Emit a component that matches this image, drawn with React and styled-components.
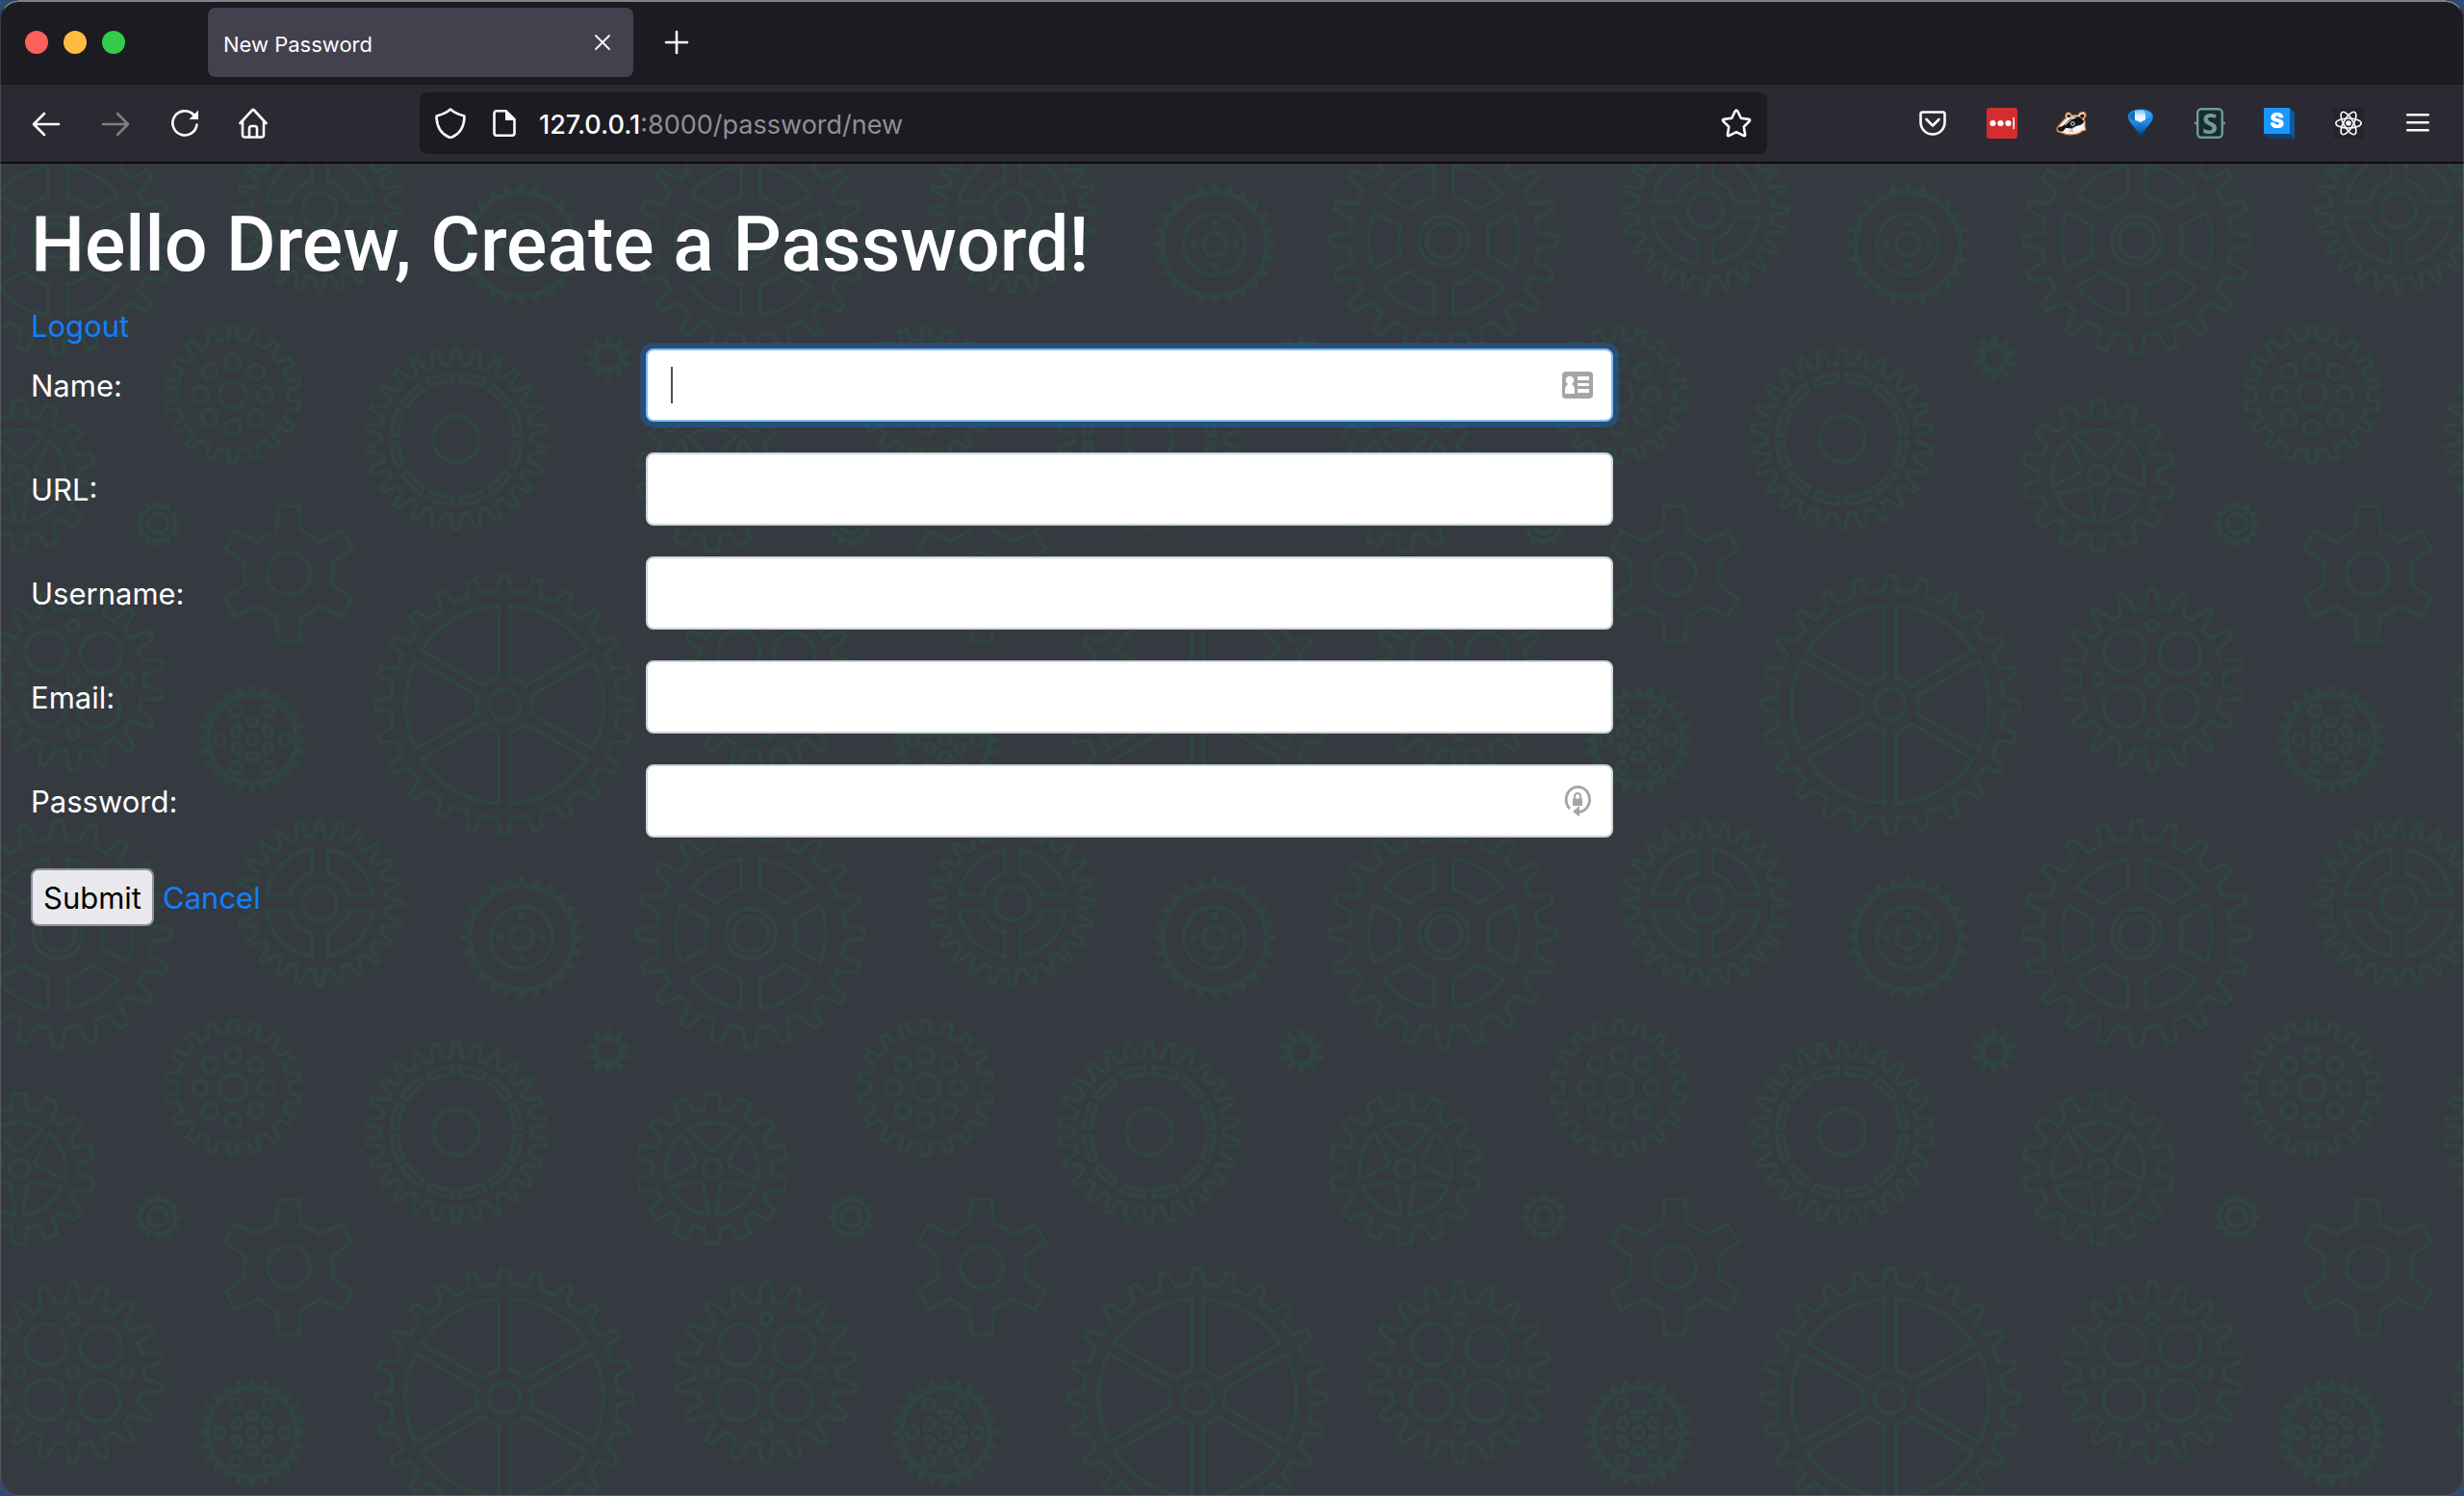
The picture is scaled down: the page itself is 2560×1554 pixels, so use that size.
import React from "react";
import styled, { createGlobalStyle } from "styled-components";

const GlobalStyle = createGlobalStyle`
  *, *::before, *::after { box-sizing: border-box; }
  body {
    margin: 0;
    background: #2c4a74;
    font-family: Inter, "Liberation Sans", sans-serif;
  }
`;

const Window = styled.div`
  position: relative;
  min-height: 100vh;
  display: flex;
  flex-direction: column;
  overflow: hidden;
  border-radius: 20px;
  background: #353940;

  &::after {
    content: "";
    position: absolute;
    inset: 0;
    border: 1px solid rgba(255, 255, 255, 0.15);
    border-top: 2px solid rgba(255, 255, 255, 0.45);
    border-radius: 20px;
    pointer-events: none;
  }
`;

const TabBar = styled.header`
  display: flex;
  align-items: center;
  height: 88px;
  padding: 0 26px;
  background: #1c1b22;
`;

const Lights = styled.div`
  display: flex;
  gap: 16px;
  width: 190px;
`;

const Light = styled.span`
  width: 24px;
  height: 24px;
  border-radius: 50%;
  background: ${(p) => p.$color};
`;

const Tab = styled.div`
  display: flex;
  align-items: center;
  justify-content: space-between;
  width: 442px;
  height: 72px;
  padding: 0 16px;
  border-radius: 8px;
  background: #42414d;
  color: #fbfbfe;
`;

const TabTitle = styled.span`
  padding-top: 4px;
  font-size: 22px;
  line-height: 32px;
`;

const IconButton = styled.button`
  display: flex;
  flex: none;
  align-items: center;
  justify-content: center;
  width: 32px;
  height: 32px;
  padding: 0;
  border: 0;
  background: none;
  color: #fbfbfe;
  opacity: ${(p) => (p.disabled ? 0.4 : 1)};

  svg { display: block; }
`;

const NewTab = styled(IconButton)`
  margin-left: 29px;
`;

const Toolbar = styled.nav`
  display: flex;
  align-items: center;
  justify-content: space-between;
  gap: 156px;
  height: 82px;
  padding: 0 32px;
  border-bottom: 2px solid #0c0c0d;
  background: #2b2a33;
`;

const ToolGroup = styled.div`
  display: flex;
  flex: none;
  gap: 40px;
`;

const UrlBar = styled.div`
  display: flex;
  flex: 1;
  align-items: center;
  gap: 20px;
  height: 64px;
  padding: 0 16px;
  border-radius: 8px;
  background: #1c1b22;
`;

const UrlIcons = styled.div`
  display: flex;
  gap: 24px;
`;

const Url = styled.div`
  flex: 1;
  padding-top: 4px;
  color: #8f8f95;
  font-size: 27px;
  line-height: 36px;

  b {
    color: #fbfbfe;
    font-weight: 500;
  }
`;

const Page = styled.main`
  position: relative;
  flex: 1;
  padding: 32px;
  color: #fff;
  font-size: 31px;
  line-height: 48px;
`;

const Backdrop = styled.svg`
  position: absolute;
  inset: 0;
  width: 100%;
  height: 100%;
`;

const Content = styled.div`
  position: relative;
`;

const Title = styled.h1`
  margin: 0 0 8px;
  font-family: Roboto, Inter, sans-serif;
  font-size: 79px;
  font-weight: 500;
  line-height: 104px;
`;

const Link = styled.a`
  color: #147eff;
  text-decoration: none;
`;

const LinkLine = styled.div`
  height: 48px;
  line-height: 50px;
`;

const FieldRow = styled.div`
  display: grid;
  grid-template-columns: repeat(12, 1fr);
  column-gap: 60px;
  align-items: center;
  margin-bottom: 32px;
`;

const Label = styled.label`
  grid-column: span 3;
  padding-top: 2px;
`;

const Control = styled.div`
  position: relative;
  grid-column: span 5;
`;

const Input = styled.input`
  display: block;
  width: 100%;
  height: 76px;
  padding: 12px 24px;
  border: 2px solid ${(p) => (p.$active ? "#80bdff" : "#ced4da")};
  border-radius: 8px;
  outline: 0;
  background: #fff;
  box-shadow: ${(p) => (p.$active ? "0 0 0 6px rgba(20, 115, 215, 0.34)" : "none")};
  color: #495057;
  font: inherit;
`;

const Caret = styled.span`
  position: absolute;
  top: 19px;
  left: 26px;
  width: 2px;
  height: 38px;
  background: #495057;
`;

const FieldIcon = styled.span`
  position: absolute;
  top: 22px;
  right: 21px;
  width: 32px;
  height: 32px;
  color: #a5a5a5;

  svg { display: block; }
`;

const Actions = styled.div`
  display: flex;
  align-items: center;
  gap: 9px;

  a { padding-top: 2px; }
`;

const Submit = styled.button`
  height: 60px;
  padding: 2px 11px 0;
  border: 2px solid #8f8f9d;
  border-radius: 8px;
  background: #e9e9ed;
  color: #000;
  font: inherit;
`;

/* ---------- gear pattern ---------- */

const point = (r, a) => [r * Math.cos(a), r * Math.sin(a)];
const fmt = (p) => p.map((n) => n.toFixed(2)).join(" ");

// Outline of a gear; tip and base are half widths of a tooth.
function gearPath(n, outer, root, tip, base, start = -Math.PI / 2, bulge = 0) {
  let d = "";
  for (let i = 0; i < n; i++) {
    const a = start + (i * 2 * Math.PI) / n;
    const place = (along, across) => [
      along * Math.cos(a) - across * Math.sin(a),
      along * Math.sin(a) + across * Math.cos(a),
    ];
    const along = Math.sqrt(root * root - base * base);
    d += i === 0 ? `M${fmt(place(along, -base))}` : `A${root} ${root} 0 0 1 ${fmt(place(along, -base))}`;
    if (bulge) {
      d += `Q${fmt(place(outer - 4, -bulge))} ${fmt(place(outer, -tip))}`;
      d += `L${fmt(place(outer, tip))}`;
      d += `Q${fmt(place(outer - 4, bulge))} ${fmt(place(along, base))}`;
    } else {
      d += `L${fmt(place(outer, -tip))}L${fmt(place(outer, tip))}L${fmt(place(along, base))}`;
    }
    if (i === n - 1) {
      const p = [
        along * Math.cos(start) + base * Math.sin(start),
        along * Math.sin(start) - base * Math.cos(start),
      ];
      d += `A${root} ${root} 0 0 1 ${fmt(p)}Z`;
    }
  }
  return d;
}

// Ring sectors split by straight bars that are 2 * gap wide.
function sectors(n, outer, inner, gap, start = -Math.PI / 2) {
  let d = "";
  const step = (2 * Math.PI) / n;
  for (let i = 0; i < n; i++) {
    const a = start + i * step;
    const b = a + step;
    const o = Math.asin(gap / outer);
    const q = Math.asin(gap / inner);
    d += `M${fmt(point(outer, a + o))}A${outer} ${outer} 0 0 1 ${fmt(point(outer, b - o))}`;
    d += `L${fmt(point(inner, b - q))}A${inner} ${inner} 0 0 0 ${fmt(point(inner, a + q))}Z`;
  }
  return d;
}

const around = (n, r, size, offset = 0) =>
  Array.from({ length: n }, (_, i) => {
    const [x, y] = point(r, offset + (i * 2 * Math.PI) / n);
    return <circle key={i} cx={x} cy={y} r={size} />;
  });

const GEAR = "#304440";

function Gear({ x, y, d, children }) {
  return (
    <g transform={`translate(${x} ${y})`}>
      <path d={d} />
      {children}
    </g>
  );
}

const Toothed = ({ n, outer, root, tip, base, hole }) => (
  <path
    d={`${gearPath(n, outer, root, tip, base)}M${hole} 0A${hole} ${hole} 0 1 0 ${-hole} 0A${hole} ${hole} 0 1 0 ${hole} 0Z`}
    fill={GEAR}
    fillRule="evenodd"
    strokeWidth="1"
    strokeLinejoin="round"
  />
);

function GearTile() {
  return (
    <g id="gear-tile" fill="none" stroke={GEAR} strokeWidth="4">
      <Gear x={60} y={80} d={gearPath(20, 118, 98, 4.5, 8.5)}>
        <circle r="26" />
        <circle r="18" />
        <path d={sectors(6, 78, 47, 10)} />
      </Gear>
      <Gear x={332} y={48} d={gearPath(24, 86, 70, 2, 5.5)}>
        <circle r="18" />
        <path d={sectors(4, 56, 32, 8)} />
      </Gear>
      <g transform="translate(542 84)">
        <Toothed n={24} outer={63} root={56} tip={1.5} base={4} hole={52} />
        <circle r="32" />
        <circle r="12" />
        <g fill={GEAR} stroke="none">{around(4, 22, 4)}</g>
      </g>
      <g transform="translate(632 202)">
        <Toothed n={10} outer={23.5} root={15} tip={1.5} base={3.5} hole={10.5} />
      </g>
      <Gear x={242} y={240} d={gearPath(18, 70, 58, 4, 5)}>
        <circle r="14" />
        {around(8, 34, 8)}
      </Gear>
      <Gear x={474} y={286} d={gearPath(26, 94, 78, 2.5, 6)}>
        <circle r="24" />
        <path d={sectors(12, 68, 60.5, 4)} />
      </Gear>
      <Gear x={20} y={324} d={gearPath(14, 78, 62, 6.5, 8.5)}>
        <circle r="10" />
        {[0, 72, 144, 216, 288].map((a) => (
          <path key={a} transform={`rotate(${a})`} d="M-25 -41A48 48 0 0 1 25 -41L3 -19Q0 -17 -3 -19Z" />
        ))}
      </Gear>
      <g transform="translate(164 374)">
        <Toothed n={12} outer={23.5} root={19.5} tip={1.5} base={3} hole={16.5} />
        <circle r="10" />
      </g>
      <Gear x={300} y={426} d={gearPath(6, 70, 46, 10.5, 13)}>
        <circle r="22" />
      </Gear>
      <Gear x={76} y={536} d={gearPath(18, 94, 74, 2.5, 7, -Math.PI / 2, 6)}>
        <circle cx="-28" cy="-29" r="21.5" />
        <circle cx="29" cy="-27" r="21.5" />
        <circle cx="-29" cy="28" r="21.5" />
        <circle cx="27" cy="29" r="21.5" />
        <circle r="6" />
        {around(4, 56, 6)}
      </Gear>
      <g transform="translate(262 598)">
        <Toothed n={24} outer={55.5} root={48} tip={1.5} base={4} hole={44} />
        {around(6, 34, 6)}
        <circle r="6" />
        {[0, 60, 120, 180, 240, 300].map((a) => (
          <path key={a} transform={`rotate(${a})`} d="M-7 -21A22 22 0 0 1 7 -21L4 -14H-4Z" />
        ))}
      </g>
      <Gear x={524} y={562} d={gearPath(24, 134, 118, 4, 7.5)}>
        <circle r="16" />
        <path d={sectors(6, 103, 29, 6)} />
      </Gear>
    </g>
  );
}

const GearBackdrop = () => (
  <Backdrop aria-hidden="true">
    <defs>
      <GearTile />
      <pattern id="gears" width="720" height="720" patternUnits="userSpaceOnUse">
        <use href="#gear-tile" />
        <use href="#gear-tile" x="720" />
        <use href="#gear-tile" y="720" />
        <use href="#gear-tile" x="720" y="720" />
      </pattern>
    </defs>
    <rect width="100%" height="100%" fill="url(#gears)" />
  </Backdrop>
);

/* ---------- icons ---------- */

const Icon = ({ children, size = 32, ...rest }) => (
  <svg
    width={size}
    height={size}
    viewBox={`0 0 ${size} ${size}`}
    fill="none"
    stroke="currentColor"
    strokeWidth="2.6"
    strokeLinecap="round"
    strokeLinejoin="round"
    overflow="visible"
    aria-hidden="true"
    {...rest}
  >
    {children}
  </svg>
);

const CloseIcon = () => (
  <Icon size={16} strokeWidth="1.8"><path d="M1 1l14 14M15 1L1 15" /></Icon>
);
const PlusIcon = () => (
  <Icon size={24} strokeWidth="2.6"><path d="M12 1v22M1 12h22" /></Icon>
);
const BackIcon = () => (
  <Icon><path d="M29 17H3.500M14 6L3 17l11 11" /></Icon>
);
const ForwardIcon = () => (
  <Icon><path d="M3 17h25.500M18 6l11 11-11 11" /></Icon>
);
const ReloadIcon = () => (
  <Icon>
    <path d="M28.500 17.500A12.600 12.600 0 1 1 24.500 6.500L27 9" />
    <path d="M30 2.500V12h-9.500z" fill="currentColor" stroke="none" />
  </Icon>
);
const HomeIcon = () => (
  <Icon>
    <path d="M1.500 16L14 2.500q1-1 2 0L28.500 16M4 14v14q0 2.500 2.500 2.500h17q2.500 0 2.500-2.500V14M11 30.500v-9q0-2.500 2.500-2.500h3q2.500 0 2.500 2.500v9" />
  </Icon>
);
const ShieldIcon = () => (
  <Icon><path d="M16 1.500C12 5 7 7 3 8c-1 0-1.500 1-1.500 2C2 19 6 27 14.500 30.500q1.500.6 3 0C26 27 30 19 30.500 10c0-1-.5-2-1.500-2C25 7 20 5 16 1.500z" /></Icon>
);
const DocIcon = () => (
  <Icon>
    <path d="M17.500 3.300H8q-2.500 0-2.500 2.500v20.400q0 2.500 2.500 2.500h16q2.500 0 2.500-2.500V12z" />
    <path d="M17 3l10.500 10H17z" fill="currentColor" stroke="none" />
  </Icon>
);
const StarIcon = () => (
  <Icon><path d="M16 2.500q.8 0 1.300 1l3.500 7.200 8 1.200q2.200.4.700 2.100l-5.700 5.700 1.300 8q.3 2.100-1.700 1.200L16 25.200l-7.400 3.700q-2 .9-1.700-1.200l1.300-8L2.500 14q-1.500-1.700.7-2.100l8-1.200 3.500-7.200q.5-1 1.300-1z" /></Icon>
);
const PocketIcon = () => (
  <Icon>
    <path d="M5.500 4.500h21q2 0 2 2V15c0 7-5.500 12.500-12.500 12.500S3.500 22 3.500 15V6.500q0-2 2-2z" />
    <path d="M9.500 12l6.500 6.500 6.500-6.500" />
  </Icon>
);
const DotsIcon = () => (
  <Icon stroke="none">
    <rect width="32" height="32" rx="3" fill="#d32d2f" />
    <g fill="#fff">
      <circle cx="6.500" cy="16" r="3.100" />
      <circle cx="14.500" cy="16" r="3.100" />
      <circle cx="22.500" cy="16" r="3.100" />
      <rect x="27.500" y="10" width="1.500" height="12" />
    </g>
  </Icon>
);
const BadgerIcon = () => (
  <Icon stroke="none">
    <path
      d="M10.500 10.500C9 6.500 11.500 4 14.500 5.500L16.500 8l7-.3C24 4.500 28 3.500 30.500 5.500c1.200 2.500 0 4.500-1.500 5.500 1.500 3 1.500 5.500 1 8l1 4-4 1.200C24 28 12 29 8 26.500L3 25c-2.500-.5-2.500-3.500-1-5C4 17 7.500 13.500 10.500 10.500z"
      fill="#f6f4f1"
      stroke="#d9803c"
      strokeWidth="1.300"
    />
    <path d="M1.800 21c1-1.500 3-1 5-2l6.500-6c4-3.500 8-5 12-3.500l4 4.500c-1.500 3-3.500 4-6.500 4.500-3 .5-4 2.500-7 3-3 0-4-1-6 0l-2.500 3C5 25 1.300 24 1.800 21z" fill="#141416" />
    <path d="M12 10c-1-3 .5-4 2.500-2.500l1.500 2zM25 9c.5-3 3-3 4.500-2 .3 2-1 3.500-2 4z" fill="#141416" />
    <path d="M9 17.500L18 10l5-.5-7 3-6 5.500z" fill="#f6f4f1" />
    <circle cx="17.500" cy="16.500" r="2.300" fill="#e4e4e4" />
    <circle cx="17.500" cy="16.500" r="1.300" fill="#111" />
    <path d="M14 24.500q2-2 4 0M18 20.500l-2 3" stroke="#9a9a9a" strokeWidth="1" />
  </Icon>
);
const BalloonIcon = () => (
  <Icon stroke="none">
    <defs>
      <linearGradient id="balloon" x1="0" y1="0" x2="0" y2="1">
        <stop offset="0" stopColor="#0f86e6" />
        <stop offset="0.45" stopColor="#1d8deb" />
        <stop offset="0.75" stopColor="#0d60ad" />
        <stop offset="1" stopColor="#052a4e" />
      </linearGradient>
      <linearGradient id="shine" x1="0" y1="0" x2="0" y2="1">
        <stop offset="0" stopColor="#6fbdf5" />
        <stop offset="0.5" stopColor="#e2f3fe" />
        <stop offset="1" stopColor="#ffffff" />
      </linearGradient>
    </defs>
    <path d="M16 1.500C23.500 1.500 29 4 29 9c0 6-8 11.500-10.500 17.500L18 30q-2 1.300-4 0l-.5-3.500C11 20.500 3 15 3 9c0-5 5.500-7.500 13-7.500z" fill="url(#balloon)" />
    <path d="M9.500 3.500Q5 5.500 4 9.500l5 4 2-1z" fill="#1368bd" />
    <path d="M10 3q5-1.500 10.500-.5L21.500 12 16 15l-6-2.500z" fill="url(#shine)" />
    <path d="M20.500 2.500q6 1 7.500 6L21.500 12z" fill="#3aa3f7" />
  </Icon>
);
const BracesIcon = () => (
  <Icon>
    <rect x="3.200" y="1.200" width="25.600" height="29.600" rx="4" fill="#162c2c" stroke="#72989c" strokeWidth="2.400" />
    <path d="M0 16h3M29 16h3" stroke="#72989c" strokeWidth="2.400" strokeLinecap="butt" />
    <text x="16" y="26.500" textAnchor="middle" fontFamily="Open Sans, sans-serif" fontWeight="700" fontSize="29" fill="#72989c" stroke="none">S</text>
  </Icon>
);
const BlockIcon = () => (
  <Icon stroke="none">
    <path d="M27 0l5 5.500V32L27 27z" fill="#0d5b9e" />
    <path d="M0 27h27l5 5H5.500z" fill="#0a4272" />
    <rect width="27" height="27" fill="#1a97ff" />
    <text x="13.500" y="21" textAnchor="middle" fontFamily="Inter, sans-serif" fontWeight="900" fontSize="22" fill="#fff">S</text>
  </Icon>
);
const AtomIcon = () => (
  <Icon strokeWidth="1.600">
    <rect width="32" height="32" fill="#25242c" stroke="none" />
    {[0, 60, 120].map((a) => (
      <ellipse key={a} cx="16" cy="16" rx="13.200" ry="5" transform={`rotate(${a} 16 16)`} />
    ))}
    <circle cx="16" cy="16" r="2.800" fill="currentColor" stroke="none" />
  </Icon>
);
const MenuIcon = () => (
  <Icon><path d="M5.300 7.300h21.400M5.300 15.300h21.400M5.300 23.300h21.400" /></Icon>
);
const CardIcon = () => (
  <Icon stroke="none">
    <rect y="2" width="32" height="28" rx="4" fill="currentColor" />
    <g fill="#fff">
      <circle cx="8" cy="11" r="4.300" />
      <path d="M3 25v-3q0-5 3-7h4q3 2 3 7v3z" />
      <rect x="16" y="7" width="12" height="4" />
      <rect x="16" y="14" width="12" height="3" />
      <rect x="16" y="20" width="12" height="4" />
    </g>
  </Icon>
);
const LockCycleIcon = () => (
  <Icon strokeWidth="2.800" strokeLinecap="butt">
    <path d="M8 24A12.200 13 0 1 1 17 27.500" />
    <path d="M18 21v11.500L11 27z" fill="currentColor" stroke="none" />
    <rect x="11" y="13.500" width="10" height="7.500" fill="currentColor" stroke="none" />
    <path d="M13 14v-3a3 3 0 0 1 6 0V14" strokeWidth="1.800" />
  </Icon>
);

const fields = [
  { id: "name", label: "Name:", type: "text", active: true, icon: <CardIcon /> },
  { id: "url", label: "URL:", type: "text" },
  { id: "username", label: "Username:", type: "text" },
  { id: "email", label: "Email:", type: "email" },
  { id: "password", label: "Password:", type: "password", icon: <LockCycleIcon /> },
];

const extensions = [
  ["Pocket", PocketIcon],
  ["Password manager", DotsIcon],
  ["Badger", BadgerIcon],
  ["Balloon", BalloonIcon],
  ["Braces", BracesIcon],
  ["Block", BlockIcon],
  ["React tools", AtomIcon],
  ["Menu", MenuIcon],
];

export default function App() {
  return (
    <>
      <GlobalStyle />
      <Window>
        <TabBar>
          <Lights>
            <Light $color="#ff5f5b" />
            <Light $color="#febd3f" />
            <Light $color="#33cc48" />
          </Lights>
          <Tab>
            <TabTitle>New Password</TabTitle>
            <IconButton aria-label="Close tab"><CloseIcon /></IconButton>
          </Tab>
          <NewTab aria-label="New tab"><PlusIcon /></NewTab>
        </TabBar>
        <Toolbar>
          <ToolGroup>
            <IconButton aria-label="Back"><BackIcon /></IconButton>
            <IconButton aria-label="Forward" disabled><ForwardIcon /></IconButton>
            <IconButton aria-label="Reload"><ReloadIcon /></IconButton>
            <IconButton aria-label="Home"><HomeIcon /></IconButton>
          </ToolGroup>
          <UrlBar>
            <UrlIcons>
              <IconButton aria-label="Tracking protection"><ShieldIcon /></IconButton>
              <IconButton aria-label="Site information"><DocIcon /></IconButton>
            </UrlIcons>
            <Url><b>127.0.0.1</b>:8000/password/new</Url>
            <IconButton aria-label="Bookmark"><StarIcon /></IconButton>
          </UrlBar>
          <ToolGroup>
            {extensions.map(([name, Glyph]) => (
              <IconButton key={name} aria-label={name}><Glyph /></IconButton>
            ))}
          </ToolGroup>
        </Toolbar>
        <Page>
          <GearBackdrop />
          <Content>
            <Title>Hello Drew, Create a Password!</Title>
            <LinkLine><Link href="#logout">Logout</Link></LinkLine>
            <form onSubmit={(e) => e.preventDefault()}>
              {fields.map((f) => (
                <FieldRow key={f.id}>
                  <Label htmlFor={f.id}>{f.label}</Label>
                  <Control>
                    <Input id={f.id} name={f.id} type={f.type} $active={f.active} />
                    {f.active && <Caret />}
                    {f.icon && <FieldIcon>{f.icon}</FieldIcon>}
                  </Control>
                </FieldRow>
              ))}
              <Actions>
                <Submit type="submit">Submit</Submit>
                <Link href="#cancel">Cancel</Link>
              </Actions>
            </form>
          </Content>
        </Page>
      </Window>
    </>
  );
}
